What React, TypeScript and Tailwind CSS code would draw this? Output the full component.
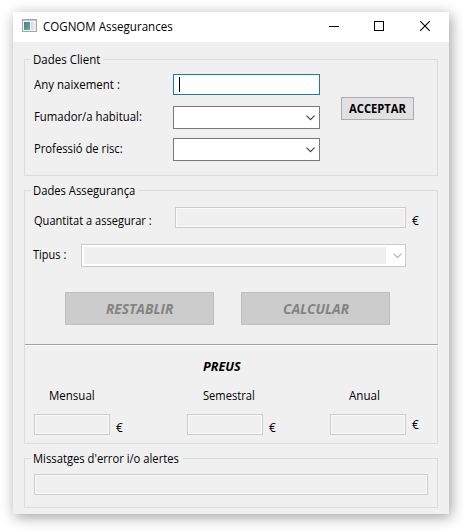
import { useLayoutEffect, useRef, useState, type ReactNode } from "react";

type LabelProps = { children: string; width: number; className?: string };

// One line of text condensed or widened to the given width.
function Label({ children, width, className = "" }: LabelProps) {
  const ref = useRef<HTMLSpanElement>(null);
  const [scale, setScale] = useState(1);
  useLayoutEffect(() => {
    if (ref.current) setScale(width / ref.current.offsetWidth);
  }, [width, children]);
  return (
    <span className={`block h-4 shrink-0 whitespace-nowrap leading-[18px] ${className}`} style={{ width }}>
      <span ref={ref} className="inline-block origin-left" style={{ transform: `scaleX(${scale})` }}>
        {children}
      </span>
    </span>
  );
}

function Group({ title, titleWidth, className, children }: { title: string; titleWidth: number; className: string; children: ReactNode }) {
  return (
    <section className={`relative ml-[11px] w-[414px] shrink-0 border border-[#dcdcdc] ${className}`}>
      <div className="absolute -top-[9px] left-[6px] bg-[#f0f0f0] pl-[2px] pr-[3px]">
        <Label width={titleWidth}>{title}</Label>
      </div>
      {children}
    </section>
  );
}

function Chevron({ className }: { className: string }) {
  return (
    <svg width="9" height="6" viewBox="0 0 9 6" fill="none" className={className}>
      <path d="M0.5 0.7 4.5 4.7 8.5 0.7" stroke="currentColor" strokeWidth="1.2" />
    </svg>
  );
}

function Select() {
  return (
    <div className="flex h-[23px] w-[147px] items-center justify-end border border-[#7a7a7a] bg-white pr-1">
      <Chevron className="text-[#444]" />
    </div>
  );
}

function Disabled({ className }: { className: string }) {
  return (
    <div className={`h-[21px] shrink-0 border border-[#cccccc] bg-[#f0f0f0] shadow-[inset_0_0_0_1px_#fbfbfb] ${className}`} />
  );
}

export default function App() {
  return (
    <div className="h-[531px] w-[463px] overflow-hidden bg-white pl-[13px] pt-3 font-['Open_Sans','Noto_Sans',sans-serif] text-[12px] text-black">
      <main className="flex h-[502px] w-[436px] flex-col bg-[#f0f0f0] shadow-[2px_3px_13px_0px_rgba(0,0,0,0.38)]">
        <header className="flex h-[30px] shrink-0 bg-white">
          <svg width="15" height="13" viewBox="0 0 15 13" className="ml-[9px] mt-[7px]">
            <defs>
              <linearGradient id="pane" x1="0" y1="0" x2="1" y2="1">
                <stop offset="0" stopColor="#4b779b" />
                <stop offset="1" stopColor="#62b286" />
              </linearGradient>
            </defs>
            <rect x="0.5" y="0.5" width="14" height="12" fill="#f5f6f8" stroke="#a0a5aa" />
            <path d="M1 1.5H14" stroke="#c3c8ce" />
            <rect x="2" y="3" width="6" height="8" fill="url(#pane)" />
            <rect x="9" y="3" width="2" height="8" fill="#d8dce2" />
            <rect x="11.5" y="3" width="2" height="8" fill="#e4e7eb" />
          </svg>
          <Label width={130} className="ml-[6px] mt-[6px]">COGNOM Assegurances</Label>
          <svg width="102" height="12" viewBox="0 0 102 12" fill="none" stroke="#000" className="ml-[156px] mt-[8px]">
            <path d="M0 6.5H10" />
            <rect x="45.5" y="1.5" width="9" height="9" />
            <path d="M91.2 1.2 100.8 10.8M100.8 1.2 91.2 10.8" strokeWidth="1.1" />
          </svg>
        </header>

        <Group title="Dades Client" titleWidth={67} className="mt-[17px] h-[117px]">
          <div className="flex pl-[9px] pt-[14px]">
            <div className="w-[139px] pt-[2px]">
              <Label width={86}>Any naixement :</Label>
              <Label width={108} className="mt-4">Fumador/a habitual:</Label>
              <Label width={89} className="mt-4">Professió de risc:</Label>
            </div>
            <div className="w-[147px]">
              <div className="h-[21px] border border-[#1b78b8] bg-white pl-[5px] pt-[2px]">
                <div className="h-[15px] w-px bg-black" />
              </div>
              <div className="mt-[11px]"><Select /></div>
              <div className="mt-[9px]"><Select /></div>
            </div>
            <button className="ml-[21px] mt-[23px] flex h-[23px] w-[73px] justify-center border border-[#adadad] bg-[#e1e1e1] pt-[2px] font-bold">
              <Label width={57} className="text-left">ACCEPTAR</Label>
            </button>
          </div>
        </Group>

        <Group title="Dades Assegurança" titleWidth={102} className="mt-[14px] h-[254px]">
          <div className="flex pl-[9px] pt-4">
            <Label width={118} className="mt-[5px]">Quantitat a assegurar :</Label>
            <Disabled className="ml-[23px] w-[231px]" />
            <Label width={7} className="ml-[6px] mt-[5px]">€</Label>
          </div>
          <div className="flex pl-2 pt-4">
            <Label width={33} className="mt-[2px]">Tipus :</Label>
            <div className="ml-[15px] flex h-[23px] w-[325px] border border-[#cccccc] bg-white p-[2px]">
              <div className="w-[302px] bg-[#f0f0f0]" />
              <Chevron className="ml-[7px] mt-[6px] text-[#b5b5b5]" />
            </div>
          </div>
          <div className="flex gap-[27px] pl-10 pt-[25px] text-[13.3px] font-bold italic text-[#838383]">
            <button className="flex h-[33px] w-[149px] justify-center border border-[#bfbfbf] bg-[#cccccc] pt-[7px]">
              <Label width={67} className="text-left">RESTABLIR</Label>
            </button>
            <button className="flex h-[33px] w-[149px] justify-center border border-[#bfbfbf] bg-[#cccccc] pt-[7px]">
              <Label width={66} className="text-left">CALCULAR</Label>
            </button>
          </div>
          <div className="-mr-px mt-[19px] h-[2px] border-b border-t border-b-white border-t-[#a0a0a0]" />
          <Label width={38} className="ml-[178px] mt-3 font-bold italic">PREUS</Label>
          <div className="mt-[13px] flex">
            <Label width={46} className="ml-6">Mensual</Label>
            <Label width={52} className="ml-[108px]">Semestral</Label>
            <Label width={31} className="ml-[94px]">Anual</Label>
          </div>
          <div className="mt-[11px] flex pl-[9px]">
            <Disabled className="w-[76px]" />
            <Label width={7} className="ml-[6px] mt-[5px]">€</Label>
            <Disabled className="ml-16 w-[76px]" />
            <Label width={7} className="ml-[6px] mt-[5px]">€</Label>
            <Disabled className="ml-[54px] w-[76px]" />
            <Label width={7} className="ml-[6px] mt-[2px]">€</Label>
          </div>
        </Group>

        <Group title="Missatges d'error i/o alertes" titleWidth={146} className="mt-[14px] h-[50px] pl-[9px] pt-[15px]">
          <Disabled className="w-[394px]" />
        </Group>
      </main>
    </div>
  );
}
